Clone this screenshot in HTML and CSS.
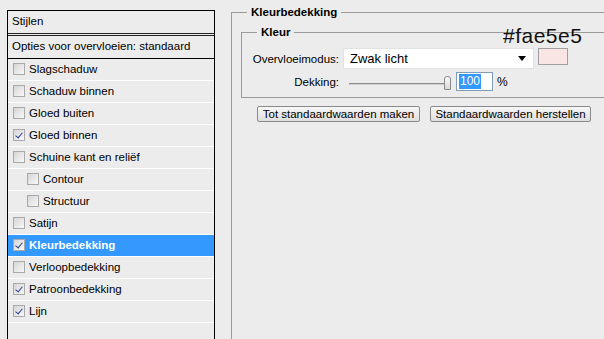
FILE: index.html
```html
<!DOCTYPE html>
<html>
<head>
<meta name="viewport" content="width=device-width, initial-scale=1">
<link rel="stylesheet" href="styles.css">
</head>
<body>

<div class="page">

  <div class="styleList">
    <div class="listHead">Stijlen</div>
    <div class="listBlend">Opties voor overvloeien: standaard</div>
    <div class="item"><span class="cb"></span>Slagschaduw</div>
    <div class="item"><span class="cb"></span>Schaduw binnen</div>
    <div class="item"><span class="cb"></span>Gloed buiten</div>
    <div class="item"><span class="cb on"></span>Gloed binnen</div>
    <div class="item"><span class="cb"></span>Schuine kant en reli&euml;f</div>
    <div class="item sub"><span class="cb"></span>Contour</div>
    <div class="item sub"><span class="cb"></span>Structuur</div>
    <div class="item"><span class="cb"></span>Satijn</div>
    <div class="item selected"><span class="cb on"></span>Kleurbedekking</div>
    <div class="item"><span class="cb"></span>Verloopbedekking</div>
    <div class="item"><span class="cb on"></span>Patroonbedekking</div>
    <div class="item"><span class="cb on"></span>Lijn</div>
  </div>

  <div class="settings">
    <fieldset class="outerGroup">
      <legend>Kleurbedekking</legend>

      <fieldset class="innerGroup">
        <legend>Kleur</legend>

        <div class="formRow">
          <label class="fieldLabel">Overvloeimodus:</label>
          <div class="selectBox"><span>Zwak licht</span><span class="arrow"></span></div>
          <div class="swatch"></div>
        </div>

        <div class="formRow second">
          <label class="fieldLabel">Dekking:</label>
          <div class="slider"><div class="track"></div><div class="thumb"></div></div>
          <div class="numBox"><span class="sel">100</span></div>
          <span class="pct">%</span>
        </div>
      </fieldset>

      <div class="buttons">
        <button class="btn first">Tot standaardwaarden maken</button>
        <button class="btn second">Standaardwaarden herstellen</button>
      </div>
    </fieldset>
  </div>

</div>

<div class="hexNote">#fae5e5</div>

</body>
</html>
```

FILE: styles.css
```css
body {
  margin: 0;
  padding: 0;
  background-color: #ececec;
  font-family: "Liberation Sans", Arial, sans-serif;
  font-size: 11.5px;
  color: #000;
  overflow: hidden;
  height: 339px;
}

.page {
  display: flex;
  align-items: flex-start;
}

/* left list of layer styles */
.styleList {
  margin: 10px 0 0 7px;
  width: 208px;
  height: 360px;
  box-sizing: border-box;
  border: 1px solid #000;
  border-bottom: none;
}

.listHead {
  height: 22px;
  line-height: 20px;
  padding-left: 4px;
  border-bottom: 3px double #222;
}

.listBlend {
  height: 22px;
  line-height: 20px;
  padding-left: 4px;
  border-bottom: 1px solid #000;
}

.item {
  display: flex;
  align-items: center;
  height: 21px;
  padding-left: 5px;
  padding-bottom: 1px;
  box-sizing: border-box;
  height: 22px;
  border-bottom: 1px solid #fff;
}

.item.sub {
  padding-left: 19px;
}

.item.selected {
  background-color: #3399ff;
  color: #fff;
  font-weight: bold;
}

.cb {
  position: relative;
  width: 10px;
  height: 10px;
  margin-right: 4px;
  border: 1px solid #a9a9a9;
  background: linear-gradient(135deg, #d6d6d6, #f8f8f8);
}

.cb.on::after {
  content: "";
  position: absolute;
  left: 3px;
  top: 1px;
  width: 3px;
  height: 6px;
  border-right: 1.5px solid #2b3d8f;
  border-bottom: 1.5px solid #2b3d8f;
  transform: rotate(40deg);
}

/* right side */
.settings {
  flex: 1;
  margin: 0 -30px 0 16px;
  padding-top: 5px;
}

fieldset {
  margin: 0;
  min-width: 0;
}

legend {
  font-weight: bold;
  line-height: 14px;
  padding: 0 4px;
}

.outerGroup {
  border: 1px solid #9a9a9a;
  padding: 6px 0 0 9px;
  height: 360px;
}

.outerGroup > legend {
  margin-left: 6px;
}

.innerGroup {
  border: 1px solid #9a9a9a;
  border-right: none;
  padding: 9px 0 6px 0;
}

.innerGroup > legend {
  margin-left: 15px;
}

.formRow {
  display: flex;
  align-items: center;
  height: 21px;
}

.formRow.second {
  margin-top: 3px;
  height: 19px;
}

.fieldLabel {
  width: 97px;
  text-align: right;
  margin-right: 4px;
}

.selectBox {
  display: flex;
  align-items: center;
  justify-content: space-between;
  width: 191px;
  height: 21px;
  box-sizing: border-box;
  padding: 0 7px 0 6px;
  background: #fff;
  border: 1px solid #e2e2e2;
  font-size: 13px;
}

.arrow {
  width: 0;
  height: 0;
  border-left: 4px solid transparent;
  border-right: 4px solid transparent;
  border-top: 5px solid #000;
}

.swatch {
  align-self: flex-start;
  margin-left: 4px;
  width: 30px;
  height: 17px;
  box-sizing: border-box;
  background: #fae5e5;
  border: 1px solid #a0a0a0;
}

.slider {
  display: flex;
  align-items: center;
  width: 102px;
  height: 19px;
  margin-left: 6px;
}

.track {
  flex: 1;
  height: 1px;
  border-top: 1px solid #8a8a8a;
  background: #d0d0d0;
  margin-top: 4px;
}

.thumb {
  width: 5px;
  height: 12px;
  margin-top: 2px;
  border: 1px solid #8a8a8a;
  border-radius: 3px 3px 1px 1px;
  background: linear-gradient(#fafafa, #d8d8d8);
}

.numBox {
  display: flex;
  align-items: center;
  margin-left: 5px;
  width: 37px;
  height: 19px;
  box-sizing: border-box;
  padding-left: 2px;
  background: #fff;
  border: 1px solid #7f9db9;
  font-size: 12px;
}

.numBox .sel {
  background: #3399ff;
  color: #fff;
  padding: 0 1px;
  line-height: 15px;
}

.pct {
  margin-left: 4px;
  font-size: 12px;
}

.buttons {
  display: flex;
  gap: 10px;
  margin: 8px 0 0 16px;
}

.btn {
  height: 16px;
  padding: 0;
  font-family: inherit;
  font-size: 11.5px;
  line-height: 13px;
  border: 1px solid #8a8a8a;
  border-radius: 2px;
  background: linear-gradient(#f7f7f7, #dedede);
  color: #000;
}

.btn.first {
  width: 163px;
}

.btn.second {
  width: 161px;
}

/* hex annotation drawn over the dialog */
.hexNote {
  position: absolute;
  left: 503px;
  top: 25px;
  font-family: "Liberation Sans", sans-serif;
  font-size: 21px;
  letter-spacing: 0.5px;
  line-height: 22px;
  color: #111;
}
```
